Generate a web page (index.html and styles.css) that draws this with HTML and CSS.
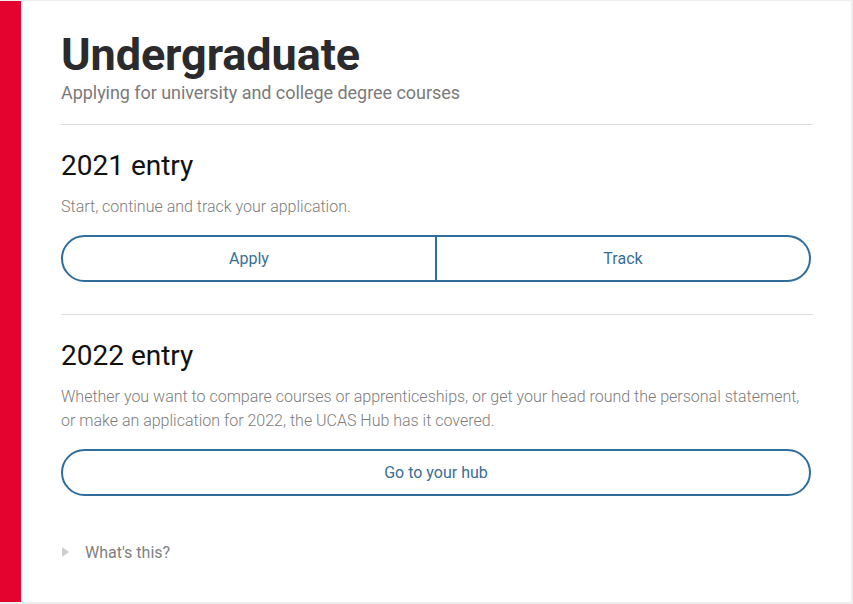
FILE: index.html
```html
<!DOCTYPE html>
<html lang="en">
<head>
<meta charset="utf-8">
<title>Undergraduate</title>
<link rel="stylesheet" href="styles.css">
</head>
<body>
<main class="card">
  <header class="card-head">
    <h1 class="title">Undergraduate</h1>
    <p class="subtitle">Applying for university and college degree courses</p>
  </header>
  <section class="entry">
    <h2 class="entry-title">2021 entry</h2>
    <p class="entry-text">Start, continue and track your application.</p>
    <div class="btn-group">
      <a class="btn btn-left" href="#">Apply</a>
      <a class="btn btn-right" href="#">Track</a>
    </div>
  </section>
  <section class="entry">
    <h2 class="entry-title">2022 entry</h2>
    <p class="entry-text">Whether you want to compare courses or apprenticeships, or get your head round the personal statement, or make an application for 2022, the UCAS Hub has it covered.</p>
    <a class="btn btn-full" href="#">Go to your hub</a>
  </section>
  <div class="details">
    <span class="caret"></span>
    <span class="details-label">What's this?</span>
  </div>
</main>
</body>
</html>
```
FILE: styles.css
```css
html, body {
  margin: 0;
  padding: 0;
}
body {
  background: #eeeeee;
  font-family: Roboto, "Liberation Sans", sans-serif;
  width: 853px;
  height: 604px;
  overflow: hidden;
}
.card {
  display: block;
  box-sizing: border-box;
  width: 851px;
  height: 601px;
  margin: 1px 2px 2px 0;
  background: #ffffff;
  border-left: 21px solid #e4032e;
  padding: 26px 40px 0 40px;
}
.card-head {
  border-bottom: 1px solid #dcdcdc;
  padding-bottom: 20px;
  margin-right: -2px;
}
.title {
  margin: 0;
  font-size: 45px;
  line-height: 55px;
  font-weight: 700;
  color: #2b2b2e;
  letter-spacing: -0.1px;
}
.subtitle {
  margin: 0;
  font-size: 18px;
  line-height: 22px;
  font-weight: 400;
  color: #7a7a7a;
  letter-spacing: -0.05px;
}
.entry {
  padding-top: 24px;
  padding-bottom: 32px;
  border-bottom: 1px solid #dcdcdc;
  margin-right: -2px;
}
.entry:last-of-type {
  border-bottom: none;
  padding-bottom: 0;
}
.entry > * {
  margin-right: 2px;
}
.entry-title {
  margin: 0;
  font-size: 28px;
  line-height: 34px;
  font-weight: 400;
  color: #111111;
}
.entry-text {
  margin: 12px 0 16px;
  font-size: 16px;
  line-height: 24px;
  font-weight: 300;
  color: #7d7d7d;
}
.btn-group {
  display: flex;
  height: 47px;
}
.btn {
  box-sizing: border-box;
  display: flex;
  align-items: center;
  justify-content: center;
  height: 47px;
  border: 2px solid #2f6d9c;
  color: #3a6e96;
  font-size: 16px;
  font-weight: 400;
  text-decoration: none;
  background: #ffffff;
}
.btn-left {
  flex: 1;
  border-radius: 24px 0 0 24px;
}
.btn-right {
  flex: 1;
  border-left: none;
  border-radius: 0 24px 24px 0;
}
.btn-full {
  border-radius: 24px;
}
.details {
  display: flex;
  align-items: center;
  margin-top: 44px;
  height: 24px;
}
.caret {
  width: 0;
  height: 0;
  border-top: 5px solid transparent;
  border-bottom: 5px solid transparent;
  border-left: 7px solid #cfcfcf;
  margin-left: 1px;
  margin-right: 16px;
}
.details-label {
  font-size: 16px;
  font-weight: 400;
  color: #808080;
}
```
